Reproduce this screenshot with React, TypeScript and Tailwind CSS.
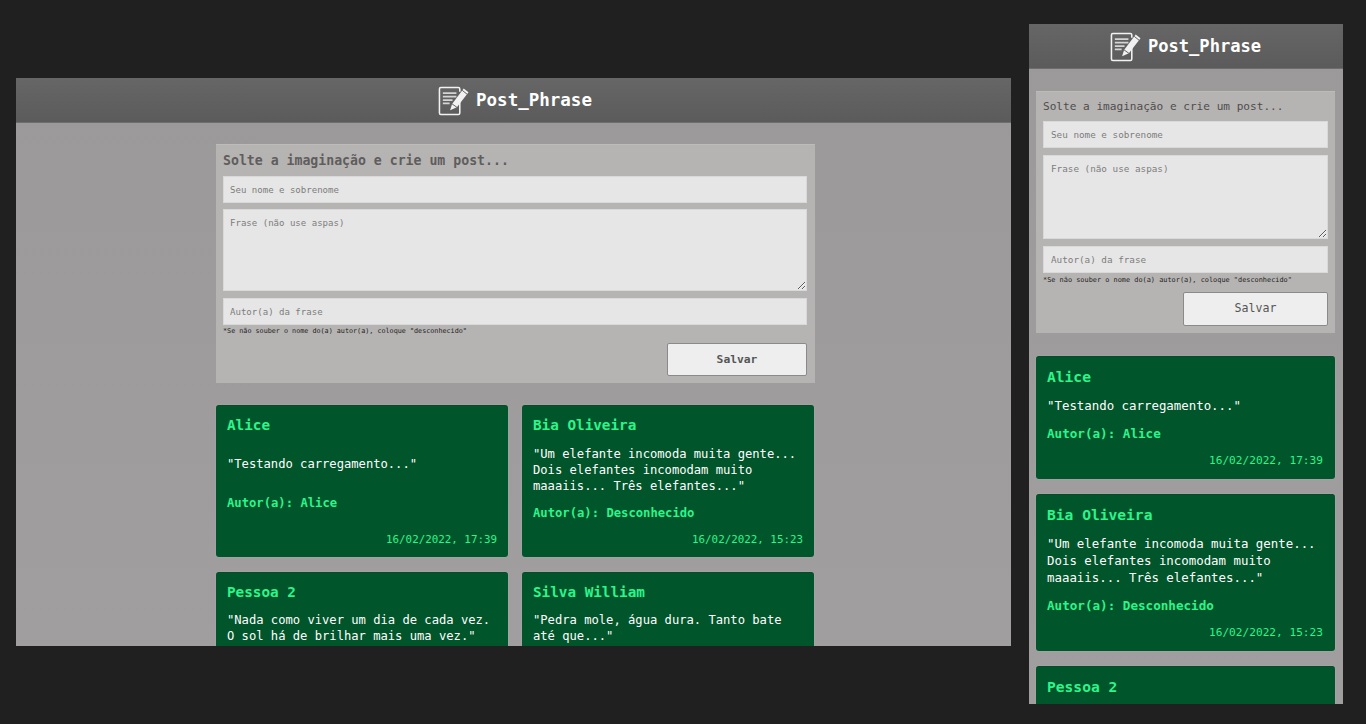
import React from 'react';

type Post = { name: string; lines?: string[]; author?: string; date?: string };

const DESKTOP_POSTS: Post[] = [
  { name: 'Alice', lines: ['"Testando carregamento..."'], author: 'Alice', date: '16/02/2022, 17:39' },
  {
    name: 'Bia Oliveira',
    lines: ['"Um elefante incomoda muita gente...', 'Dois elefantes incomodam muito', 'maaaiis... Três elefantes..."'],
    author: 'Desconhecido',
    date: '16/02/2022, 15:23',
  },
  { name: 'Pessoa 2', lines: ['"Nada como viver um dia de cada vez.', 'O sol há de brilhar mais uma vez."'] },
  { name: 'Silva William', lines: ['"Pedra mole, água dura. Tanto bate', 'até que..."'] },
];

// the phone view is cut right under the third name
const MOBILE_POSTS: Post[] = [DESKTOP_POSTS[0], DESKTOP_POSTS[1], { name: 'Pessoa 2' }];

const LogoIcon = () => (
  <svg width="31" height="31" viewBox="0 0 32 32" fill="none" className="shrink-0">
    <path d="M22.500 7V4a1.500 1.500 0 0 0-1.500-1.500H3A1.500 1.500 0 0 0 1.500 4v25A1.500 1.500 0 0 0 3 30.500h18a1.500 1.500 0 0 0 1.500-1.500V16" stroke="#f2f2f2" strokeWidth="1.600" />
    <path d="M5 8.500h14M5 12h14M5 15.500h10M5 19h7" stroke="#d4d4d4" strokeWidth="1.800" />
    <path d="M12.500 26l2-6.500L26.500 3.500l5 4-12 15.500z" fill="#f2f2f2" />
    <path d="M14.500 19.500l5 3.500M25 5.500l5 4" stroke="#5f5f5f" strokeWidth="1" />
  </svg>
);

const Header = ({ titleClass, shiftClass }: { titleClass: string; shiftClass: string }) => (
  <header className={`h-[45px] shrink-0 flex items-center justify-center gap-[7px] bg-gradient-to-b from-[#666666] to-[#5b5b5b] border-b border-[#6e6e6e] ${shiftClass}`}>
    <LogoIcon />
    <h1 className={`${titleClass} font-bold text-white leading-none pt-[2px]`}>Post_Phrase</h1>
  </header>
);

const fieldClass =
  'block w-full bg-[#e6e6e6] border border-[#d9d9d9] outline-none text-[#555] placeholder:text-[#7d7d7d]';

const DesktopCard = ({ post }: { post: Post }) => (
  <article
    className={`bg-[#00552a] rounded-[3px] border-t border-[#0a4a28] shadow-[0_0_2px_#b0aeae] px-[11px] pt-[10px] pb-[10px] flex flex-col gap-[11px] overflow-hidden text-[#2cf58a] ${
      post.date ? 'justify-between' : 'justify-start'
    }`}
  >
    <h2 className="text-[14.300px] font-bold leading-[18px]">{post.name}</h2>
    <p className="text-[12.150px] text-white leading-[16px]">
      {post.lines?.map((line) => (
        <span key={line} className="block">{line}</span>
      ))}
    </p>
    {post.author && <p className="text-[12.200px] font-bold leading-[16px]">Autor(a): {post.author}</p>}
    {post.date && <p className="text-[10.850px] text-right leading-[14px]">{post.date}</p>}
  </article>
);

const MobileCard = ({ post }: { post: Post }) => (
  <article className="bg-[#00552a] rounded-[3px] border-t border-[#0a4a28] shadow-[0_0_2px_#b0aeae] pl-[11px] pr-[12px] pt-[11px] pb-[11px] text-[#2cf58a]">
    <h2 className="text-[14.600px] font-bold leading-[18px]">{post.name}</h2>
    {post.lines && (
      <p className="text-[12.400px] text-white leading-[17px] mt-[11px]">
        {post.lines.map((line) => (
          <span key={line} className="block">{line}</span>
        ))}
      </p>
    )}
    {post.author && <p className="text-[12.600px] font-bold leading-[16px] mt-[12px]">Autor(a): {post.author}</p>}
    {post.date && <p className="text-[11.150px] text-right leading-[14px] mt-[12px]">{post.date}</p>}
  </article>
);

const DesktopWindow = () => (
  <section className="w-[995px] h-[568px] mt-[78px] ml-[16px] shrink-0 flex flex-col overflow-hidden bg-gradient-to-b from-[#9b9999] to-[#a09e9e]">
    <Header titleClass="text-[17.500px]" shiftClass="pl-[3px]" />
    <main className="w-[599px] ml-[200px] mt-[21px]">
      <form className="h-[239px] bg-[#b6b4b2] border-t border-[#bdbbb8] pl-[7px] pr-[8px] pt-[7px]">
        <h3 className="text-[13.200px] font-bold text-[#5f5d5d] leading-[17px]">Solte a imaginação e crie um post...</h3>
        <input placeholder="Seu nome e sobrenome" className={`${fieldClass} h-[27px] mt-[7px] px-[6px] text-[9.050px]`} />
        <textarea placeholder="Frase (não use aspas)" className={`${fieldClass} h-[82px] mt-[6px] px-[6px] pt-[7px] text-[9.050px] resize-y`} />
        <input placeholder="Autor(a) da frase" className={`${fieldClass} h-[27px] mt-[7px] px-[6px] text-[9.050px]`} />
        <p className="text-[6.750px] text-[#222] leading-[10px] mt-[1px]">*Se não souber o nome do(a) autor(a), coloque "desconhecido"</p>
        <div className="flex justify-end mt-[7px]">
          <button type="button" className="w-[140px] h-[33px] pt-[1px] bg-[#eeeeee] border border-[#8a8a8a] rounded-[2px] text-[11.300px] font-bold text-[#555]">Salvar</button>
        </div>
      </form>
      <div className="grid grid-cols-[292px_292px] auto-rows-[152px] gap-x-[14px] gap-y-[15px] mt-[22px]">
        {DESKTOP_POSTS.map((post) => (
          <DesktopCard key={post.name} post={post} />
        ))}
      </div>
    </main>
  </section>
);

const MobileWindow = () => (
  <section className="w-[314px] h-[680px] mt-[24px] ml-[18px] shrink-0 flex flex-col overflow-hidden bg-gradient-to-b from-[#9b9999] to-[#a09e9e]">
    <Header titleClass="text-[17.100px]" shiftClass="pr-[1px]" />
    <main className="pl-[7px] pr-[8px] pt-[22px]">
      <form className="h-[242px] bg-[#b6b4b2] border-t border-[#bdbbb8] px-[7px] pt-[7px]">
        <h3 className="text-[11.100px] text-[#4f4d4d] leading-[15px]">Solte a imaginação e crie um post...</h3>
        <input placeholder="Seu nome e sobrenome" className={`${fieldClass} h-[27px] mt-[7px] px-[7px] text-[9.300px]`} />
        <textarea placeholder="Frase (não use aspas)" className={`${fieldClass} h-[84px] mt-[7px] px-[7px] pt-[6px] text-[9.300px] resize-y`} />
        <input placeholder="Autor(a) da frase" className={`${fieldClass} h-[27px] mt-[7px] px-[7px] text-[9.300px]`} />
        <p className="text-[6.900px] text-[#222] leading-[10px] mt-[2px]">*Se não souber o nome do(a) autor(a), coloque "desconhecido"</p>
        <div className="flex justify-end mt-[7px]">
          <button type="button" className="w-[145px] h-[34px] bg-[#eeeeee] border border-[#8a8a8a] rounded-[2px] text-[11.600px] text-[#555]">Salvar</button>
        </div>
      </form>
      <div className="flex flex-col gap-[15px] mt-[23px]">
        {MOBILE_POSTS.map((post) => (
          <MobileCard key={post.name} post={post} />
        ))}
      </div>
    </main>
  </section>
);

export default function App() {
  return (
    <div className="w-[1366px] h-[724px] flex items-start overflow-hidden bg-[#202021] font-['DejaVu_Sans_Mono',monospace]">
      <DesktopWindow />
      <MobileWindow />
    </div>
  );
}
